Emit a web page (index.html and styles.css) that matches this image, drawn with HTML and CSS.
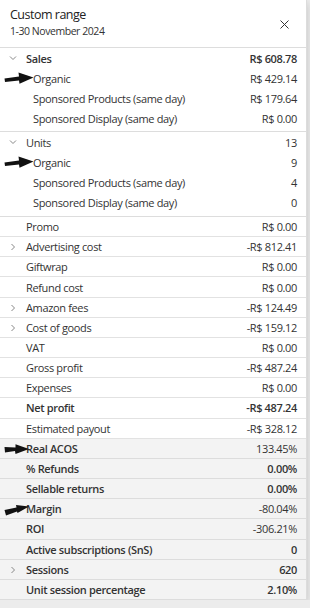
FILE: index.html
```html
<!DOCTYPE html>
<html>
<head>
<meta charset="utf-8">
<link rel="stylesheet" href="styles.css">
</head>
<body>
<div class="panel">
  <div class="header">
    <div class="titles">
      <div class="title">Custom range</div>
      <div class="date">1-30 November 2024</div>
    </div>
    <svg class="close" width="9" height="9" viewBox="0 0 9 9"><path d="M0.5 0.5L8.5 8.5M8.5 0.5L0.5 8.5" stroke="#333" stroke-width="1" fill="none"/></svg>
  </div>

  <div class="group">
    <div class="row main strong">
      <svg class="chev" width="8" height="8" viewBox="0 0 8 8"><path d="M1 2.5L4 5.5L7 2.5" stroke="#888" fill="none"/></svg>
      <span class="label">Sales</span><span class="value">R$ 608.78</span>
    </div>
    <div class="row sub">
      <svg class="arrow" width="30" height="14" viewBox="0 0 30 14"><path d="M0.5 7.5L1 11L15 9.6L15.5 12.8L29.5 6.5L14.5 1.5L15 5.6Z" fill="#111"/></svg>
      <span class="label">Organic</span><span class="value">R$ 429.14</span>
    </div>
    <div class="row sub"><span class="label">Sponsored Products (same day)</span><span class="value">R$ 179.64</span></div>
    <div class="row sub"><span class="label">Sponsored Display (same day)</span><span class="value">R$ 0.00</span></div>
  </div>

  <div class="group units">
    <div class="row main">
      <svg class="chev" width="8" height="8" viewBox="0 0 8 8"><path d="M1 2.5L4 5.5L7 2.5" stroke="#888" fill="none"/></svg>
      <span class="label">Units</span><span class="value">13</span>
    </div>
    <div class="row sub">
      <svg class="arrow" width="30" height="14" viewBox="0 0 30 14"><path d="M0.5 7.5L1 11L15 9.6L15.5 12.8L29.5 6.5L14.5 1.5L15 5.6Z" fill="#111"/></svg>
      <span class="label">Organic</span><span class="value">9</span>
    </div>
    <div class="row sub"><span class="label">Sponsored Products (same day)</span><span class="value">4</span></div>
    <div class="row sub"><span class="label">Sponsored Display (same day)</span><span class="value">0</span></div>
  </div>

  <div class="flat">
    <div class="row line"><span class="label">Promo</span><span class="value">R$ 0.00</span></div>
    <div class="row line">
      <svg class="chev" width="8" height="8" viewBox="0 0 8 8"><path d="M2.5 1L5.5 4L2.5 7" stroke="#888" fill="none"/></svg>
      <span class="label">Advertising cost</span><span class="value">-R$ 812.41</span>
    </div>
    <div class="row line"><span class="label">Giftwrap</span><span class="value">R$ 0.00</span></div>
    <div class="row line"><span class="label">Refund cost</span><span class="value">R$ 0.00</span></div>
    <div class="row line">
      <svg class="chev" width="8" height="8" viewBox="0 0 8 8"><path d="M2.5 1L5.5 4L2.5 7" stroke="#888" fill="none"/></svg>
      <span class="label">Amazon fees</span><span class="value">-R$ 124.49</span>
    </div>
    <div class="row line">
      <svg class="chev" width="8" height="8" viewBox="0 0 8 8"><path d="M2.5 1L5.5 4L2.5 7" stroke="#888" fill="none"/></svg>
      <span class="label">Cost of goods</span><span class="value">-R$ 159.12</span>
    </div>
    <div class="row line"><span class="label">VAT</span><span class="value">R$ 0.00</span></div>
    <div class="row line"><span class="label">Gross profit</span><span class="value">-R$ 487.24</span></div>
    <div class="row line"><span class="label">Expenses</span><span class="value">R$ 0.00</span></div>
    <div class="row line strong"><span class="label">Net profit</span><span class="value">-R$ 487.24</span></div>
    <div class="row line"><span class="label">Estimated payout</span><span class="value">-R$ 328.12</span></div>
  </div>

  <div class="flat gray">
    <div class="row line">
      <svg class="arrow" width="30" height="14" viewBox="0 0 30 14"><path d="M0.5 5L1 10.5L11 9L11.5 12L25 7L11.5 2.2L11.5 5.5Z" fill="#111"/></svg>
      <span class="label b">Real ACOS</span><span class="value">133.45%</span>
    </div>
    <div class="row line strong"><span class="label">% Refunds</span><span class="value">0.00%</span></div>
    <div class="row line strong"><span class="label">Sellable returns</span><span class="value">0.00%</span></div>
    <div class="row line">
      <svg class="arrow" width="30" height="14" viewBox="0 0 30 14"><path d="M0.5 8L2 13.5L13 9.5L13.5 11L25 4.5L12 3L12.5 5.5Z" fill="#111"/></svg>
      <span class="label b">Margin</span><span class="value">-80.04%</span>
    </div>
    <div class="row line"><span class="label b">ROI</span><span class="value">-306.21%</span></div>
    <div class="row line strong"><span class="label">Active subscriptions (SnS)</span><span class="value">0</span></div>
    <div class="row line strong">
      <svg class="chev" width="8" height="8" viewBox="0 0 8 8"><path d="M2.5 1L5.5 4L2.5 7" stroke="#888" fill="none"/></svg>
      <span class="label">Sessions</span><span class="value">620</span>
    </div>
    <div class="row line strong"><span class="label">Unit session percentage</span><span class="value">2.10%</span></div>
  </div>
</div>
</body>
</html>
```

FILE: styles.css
```css
* { box-sizing: border-box; }
html, body {
  margin: 0;
  padding: 0;
  background: #ececec;
  font-family: "Open Sans", "Noto Sans", sans-serif;
  color: #333;
}
.panel {
  width: 307px;
  background: #fff;
  border-right: 1px solid #dcdcdc;
  box-shadow: 0 3px 8px rgba(0,0,0,0.18);
}
.header {
  height: 48px;
  border-bottom: 1px solid #ddd;
  display: flex;
  align-items: center;
  justify-content: space-between;
  padding: 0 17px 2px 10px;
}
.titles { display: flex; flex-direction: column; gap: 1px; }
.title { font-size: 12.5px; line-height: 17px; color: #222; letter-spacing: -0.5px; }
.date { font-size: 10.5px; line-height: 15px; color: #333; letter-spacing: -0.45px; }
.close { margin-top: 4px; }

.group {
  border-bottom: 1px solid #ddd;
  padding-bottom: 3px;
}
.group.units { padding-bottom: 4px; }

.row {
  position: relative;
  display: flex;
  align-items: center;
  justify-content: space-between;
  height: 20px;
  padding: 0 9px 0 26px;
  font-size: 11px;
  letter-spacing: -0.35px;
  white-space: nowrap;
}
.row.sub { padding-left: 33px; }
.flat .row.line {
  height: 20.17px;
  border-bottom: 1px solid #e2e2e2;
}
.gray { background: #f3f3f3; }
.gray .row.line { border-bottom-color: #dcdcdc; }
.strong .label, .strong .value, .label.b { font-weight: 600; }

.chev {
  position: absolute;
  left: 9px;
  top: 6px;
}
.arrow {
  position: absolute;
  left: 4px;
  top: 3px;
}
```
